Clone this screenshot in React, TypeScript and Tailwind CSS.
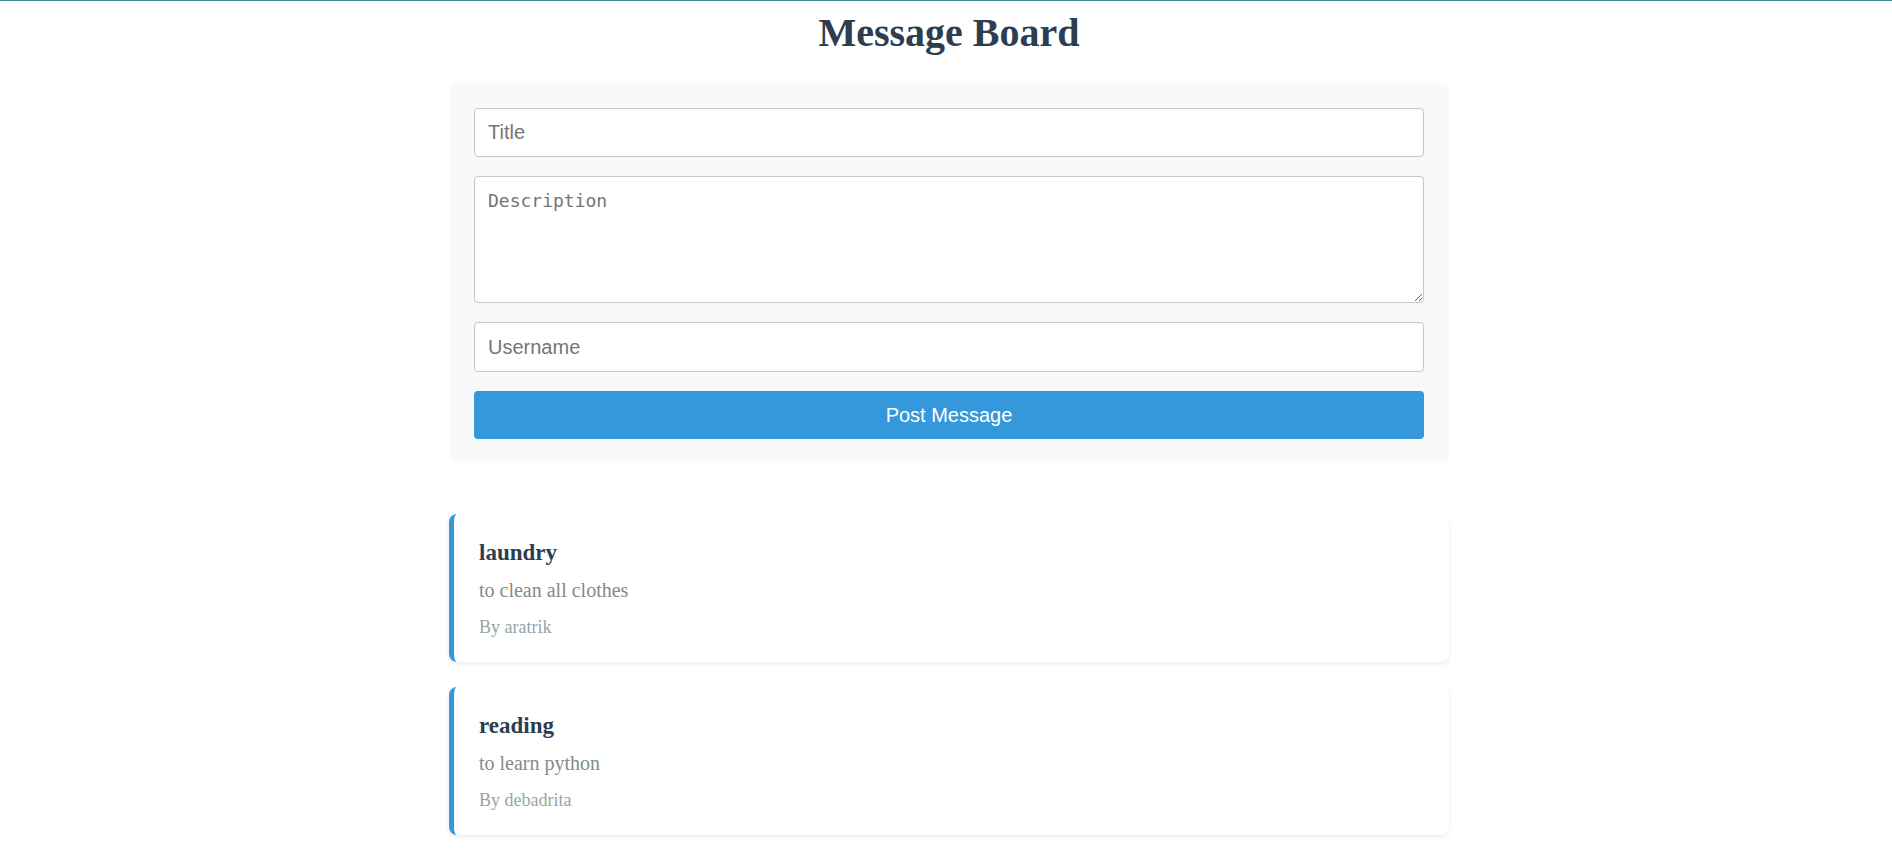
import { useState } from 'react';

interface Message {
  title: string;
  description: string;
  username: string;
}

const initialMessages: Message[] = [
  { title: 'laundry', description: 'to clean all clothes', username: 'aratrik' },
  { title: 'reading', description: 'to learn python', username: 'debadrita' },
];

export default function App() {
  const [messages, setMessages] = useState<Message[]>(initialMessages);
  const [title, setTitle] = useState('');
  const [description, setDescription] = useState('');
  const [username, setUsername] = useState('');

  const handleSubmit = (e: React.FormEvent) => {
    e.preventDefault();
    if (!title || !description || !username) return;
    setMessages([...messages, { title, description, username }]);
    setTitle('');
    setDescription('');
    setUsername('');
  };

  const inputClass =
    'w-full rounded-[4px] border border-[#c3c7cc] bg-white px-[13px] text-[20px] text-[#333] outline-none placeholder:text-[#757575]';

  return (
    <div className="min-h-screen bg-white">
      <div className="h-px bg-[#3b8589]" />
      <div className="flex justify-center pl-[6px]">
        <div className="w-[1000px] pb-10">
          <h1 className="mt-[9px] text-center text-[40px] leading-[46px] font-bold text-[#2c3e50] [font-family:'Liberation_Serif',serif]">
            Message Board
          </h1>

          <form
            onSubmit={handleSubmit}
            className="mt-[27px] flex flex-col gap-[19px] rounded-lg bg-[#f8f9fa] px-[25px] pt-[25px] pb-[24px] [font-family:'Liberation_Sans',Arial,sans-serif]"
          >
            <input
              type="text"
              placeholder="Title"
              value={title}
              onChange={e => setTitle(e.target.value)}
              className={`${inputClass} h-[49px]`}
            />
            <textarea
              placeholder="Description"
              value={description}
              onChange={e => setDescription(e.target.value)}
              className="block h-[127px] w-full rounded-[4px] border border-[#c3c7cc] bg-white px-[13px] pt-[13px] pb-[11px] text-[18px] leading-[21px] text-[#333] outline-none placeholder:text-[#757575] [font-family:'DejaVu_Sans_Mono',monospace]"
            />
            <input
              type="text"
              placeholder="Username"
              value={username}
              onChange={e => setUsername(e.target.value)}
              className={`${inputClass} h-[50px]`}
            />
            <button
              type="submit"
              className="h-[48px] w-full rounded-[4px] bg-[#3498db] text-[20px] text-white"
            >
              Post Message
            </button>
          </form>

          <div className="mt-[51px] flex flex-col gap-[25px] [font-family:'Liberation_Serif',serif]">
            {messages.map((m, i) => (
              <div
                key={i}
                className="rounded-lg border-l-[5px] border-[#3498db] bg-white pt-[26px] pr-[25px] pb-[24px] pl-[25px] shadow-[0_2px_5px_rgba(0,0,0,0.08)]"
              >
                <h3 className="text-[23px] leading-[26px] font-bold text-[#2c3e50]">{m.title}</h3>
                <p className="mt-[13px] text-[20px] leading-[23px] text-[#7f8c8d]">{m.description}</p>
                <p className="mt-[15px] text-[18px] leading-[21px] text-[#95a5a6]">By {m.username}</p>
              </div>
            ))}
          </div>
        </div>
      </div>
    </div>
  );
}
